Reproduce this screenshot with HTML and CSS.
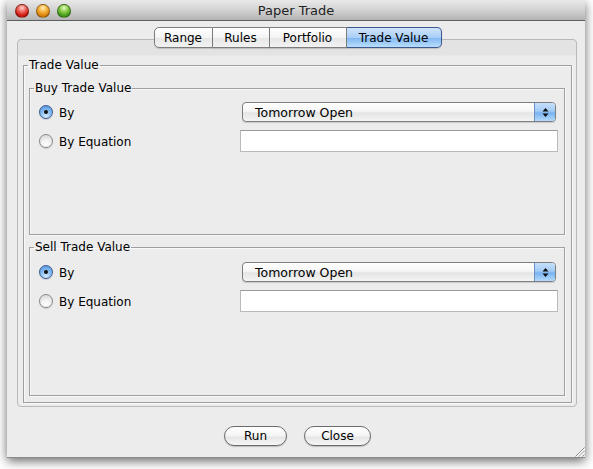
FILE: index.html
```html
<!DOCTYPE html>
<html>
<head>
<meta charset="utf-8">
<title>Paper Trade</title>
<link rel="stylesheet" href="styles.css">
</head>
<body>
<div class="window">
  <div class="titlebar">
    <div class="lights">
      <span class="light red"></span>
      <span class="light orange"></span>
      <span class="light green"></span>
    </div>
    <div class="title">Paper Trade</div>
    <div></div>
  </div>
  <div class="content">
    <div class="tabs">
      <div class="tab">Range</div>
      <div class="tab">Rules</div>
      <div class="tab">Portfolio</div>
      <div class="tab selected">Trade Value</div>
    </div>
    <div class="pane">
      <fieldset class="group outer">
        <legend>Trade Value</legend>
        <fieldset class="group inner buy">
          <legend>Buy Trade Value</legend>
          <div class="rows">
            <div class="option"><span class="radio on"></span><span class="label">By</span></div>
            <div class="combo"><span class="combo-text">Tomorrow Open</span><span class="combo-arrows"><svg width="7" height="11" viewBox="0 0 7 11"><path d="M3.5 1 L6.5 4.5 L0.5 4.5 Z M3.5 10 L6.5 6.5 L0.5 6.5 Z" fill="#111"/></svg></span></div>
            <div class="option"><span class="radio"></span><span class="label">By Equation</span></div>
            <div class="field"></div>
          </div>
        </fieldset>
        <fieldset class="group inner sell">
          <legend>Sell Trade Value</legend>
          <div class="rows">
            <div class="option"><span class="radio on"></span><span class="label">By</span></div>
            <div class="combo"><span class="combo-text">Tomorrow Open</span><span class="combo-arrows"><svg width="7" height="11" viewBox="0 0 7 11"><path d="M3.5 1 L6.5 4.5 L0.5 4.5 Z M3.5 10 L6.5 6.5 L0.5 6.5 Z" fill="#111"/></svg></span></div>
            <div class="option"><span class="radio"></span><span class="label">By Equation</span></div>
            <div class="field"></div>
          </div>
        </fieldset>
      </fieldset>
    </div>
    <div class="buttons">
      <div class="button run">Run</div>
      <div class="button close">Close</div>
    </div>
  </div>
  <svg class="grip" width="11" height="11" viewBox="0 0 11 11">
    <path d="M10.5 1.5 L1.5 10.5 M10.5 5 L5 10.5 M10.5 8.5 L8.5 10.5" stroke="#8a8a8a" stroke-width="1"/>
    <path d="M10.5 2.5 L2.5 10.5 M10.5 6 L6 10.5" stroke="#fff" stroke-width="1"/>
  </svg>
</div>
</body>
</html>
```

FILE: styles.css
```css
* { box-sizing: border-box; }
html, body { margin: 0; padding: 0; }
body {
  background: #ffffff;
  font-family: "DejaVu Sans", "Liberation Sans", sans-serif;
  font-size: 12px;
  color: #000;
  width: 593px;
  height: 469px;
  overflow: hidden;
}
.window {
  position: relative;
  margin-left: 7px;
  width: 578px;
  height: 458px;
  background: #ececec;
  box-shadow: 0 3px 10px rgba(0,0,0,0.6);
  border-bottom: 1px solid #8a8a8a;
  overflow: hidden;
}
.titlebar {
  height: 21px;
  display: grid;
  grid-template-columns: 1fr auto 1fr;
  align-items: center;
  background: linear-gradient(#e9e9e9, #d2d2d2 50%, #b4b4b4);
  border-bottom: 1px solid #5e5e5e;
}
.lights {
  display: flex;
  gap: 7px;
  padding-left: 8px;
  padding-top: 1px;
}
.light {
  width: 14px;
  height: 14px;
  border-radius: 50%;
  border: 1px solid rgba(0,0,0,0.35);
}
.light.red {
  background: radial-gradient(circle at 50% 25%, #ffd4cf 0, #f07a70 30%, #d21e14 65%, #a2120c 100%);
}
.light.orange {
  background: radial-gradient(circle at 50% 25%, #fff0c8 0, #f8c050 30%, #e08a10 65%, #b06505 100%);
}
.light.green {
  background: radial-gradient(circle at 50% 25%, #e4fcc8 0, #9ad65a 30%, #4ea21e 65%, #2e7a0e 100%);
}
.title {
  font-size: 13px;
  color: #222;
  padding-top: 1px;
}
.content {
  padding: 6px 8px 0 10px;
}
.tabs {
  position: relative;
  z-index: 1;
  display: flex;
  justify-content: center;
  height: 21px;
  margin-left: 1px;
}
.tab {
  height: 21px;
  line-height: 20px;
  text-align: center;
  white-space: nowrap;
  border: 1px solid #7d7d7d;
  border-left: none;
  background: linear-gradient(#ffffff, #f4f4f4 50%, #e6e6e6 51%, #f2f2f2);
  box-shadow: 0 1px 1px rgba(0,0,0,0.15);
}
.tab:first-child {
  border-left: 1px solid #7d7d7d;
  border-radius: 5px 0 0 5px;
  width: 59px;
}
.tab:nth-child(2) { width: 57px; }
.tab:nth-child(3) { width: 77px; }
.tab:last-child {
  border-radius: 0 5px 5px 0;
  width: 95px;
}
.tab.selected {
  border-color: #3d5790;
  background: linear-gradient(#cfe4fb, #a9cff6 50%, #7eb6f2 51%, #b9defb);
}
.pane {
  margin-top: -9px;
  height: 368px;
  border: 1px solid #b9b9b9;
  border-radius: 4px;
  padding: 18px 4px 3px 5px;
  background: linear-gradient(#e3e3e3, #e3e3e3 15px, #ececec 16px);
}
.group {
  margin: 0;
  min-width: 0;
  padding: 0;
  border: 1px solid #9f9f9f;
  box-shadow: inset 1px 1px 0 #f8f8f8, 1px 1px 0 #f8f8f8;
}
.group legend {
  padding: 0 1px;
  margin-left: 4px;
  line-height: 15px;
}
.outer {
  height: 345px;
  padding: 8px 0 6px 0;
}
.inner {
  margin: 0 6px 0 5px;
  padding-top: 6px;
}
.buy { height: 154px; }
.sell {
  height: 156px;
  margin-top: 5px;
  padding-top: 7px;
}
.rows {
  margin-left: 9px;
  display: grid;
  grid-template-columns: 201px 318px;
  grid-template-rows: 20px 22px;
  row-gap: 8px;
  align-items: center;
}
.option {
  display: flex;
  align-items: center;
  gap: 6px;
}
.label {
  padding-top: 2px;
}
.radio {
  width: 14px;
  height: 14px;
  border-radius: 50%;
  border: 1px solid #8a8a8a;
  background: radial-gradient(circle at 50% 80%, #ffffff 0, #f2f2f2 40%, #d0d0d0 100%);
  box-shadow: 0 1px 1px rgba(0,0,0,0.15);
  display: flex;
  align-items: center;
  justify-content: center;
}
.radio.on {
  border-color: #3b5a94;
  background: radial-gradient(circle at 50% 85%, #d6ecff 0, #8fc2f4 40%, #4d8fdc 100%);
}
.radio.on::after {
  content: "";
  width: 4px;
  height: 4px;
  border-radius: 50%;
  background: #111;
}
.combo {
  margin: 0 2px;
  height: 20px;
  display: flex;
  border: 1px solid #7e7e7e;
  border-radius: 4px;
  background: linear-gradient(#ffffff, #f6f6f6 45%, #e4e4e4 55%, #f4f4f4);
  box-shadow: 0 1px 1px rgba(0,0,0,0.15);
  overflow: hidden;
}
.combo-text {
  flex: 1;
  padding-left: 12px;
  line-height: 19px;
  font-size: 12.5px;
}
.combo-arrows {
  width: 21px;
  display: flex;
  align-items: center;
  justify-content: center;
  border-left: 1px solid #6d8fc4;
  background: linear-gradient(#c8e0fb, #a2cbf4 45%, #78b2f0 55%, #b4dafb);
}
.field {
  height: 22px;
  background: #fff;
  border: 1px solid #b9b9b9;
  border-top-color: #9a9a9a;
}
.buttons {
  display: flex;
  justify-content: center;
  gap: 17px;
  margin-top: 19px;
  padding-left: 1px;
}
.button {
  height: 20px;
  line-height: 19px;
  text-align: center;
  border: 1px solid #6b6b6b;
  border-radius: 10px;
  background: linear-gradient(#ffffff, #f4f4f4 50%, #e6e6e6 55%, #f6f6f6);
  box-shadow: 0 1px 1px rgba(0,0,0,0.2);
}
.run { width: 63px; }
.close { width: 67px; }
.grip {
  position: absolute;
  right: 0;
  bottom: 0;
}
```
